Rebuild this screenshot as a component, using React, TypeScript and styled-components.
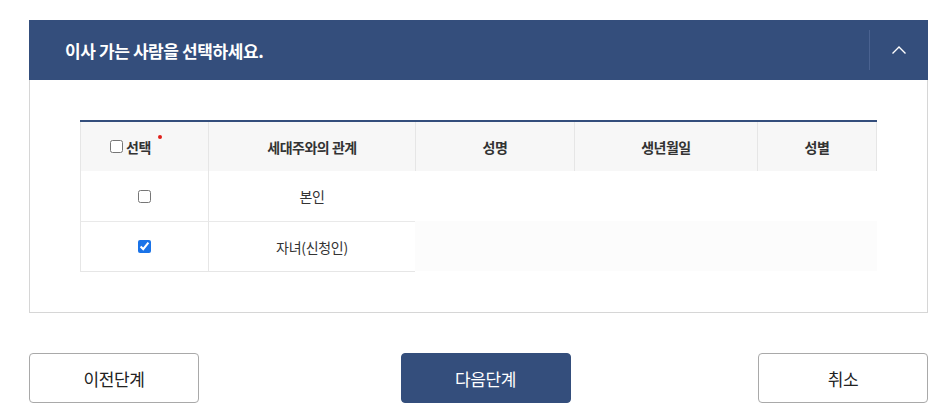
import React from "react";
import styled, { createGlobalStyle } from "styled-components";

const Global = createGlobalStyle`
  html, body { margin: 0; padding: 0; background: #fff; }
  body { font-family: "Noto Sans CJK KR", "Noto Sans", sans-serif; color: #333; }
  * { box-sizing: border-box; }
`;

const Page = styled.div`
  padding: 20px 24px 0 29px;
`;

const Section = styled.section`
  display: flex;
  flex-direction: column;
`;

const Bar = styled.div`
  height: 60px;
  background: #344e7c;
  display: flex;
  align-items: center;
  padding-left: 36px;
`;

const Title = styled.h2`
  flex: 1;
  margin: 0;
  font-size: 17px;
  font-weight: 700;
  color: #fff;
  letter-spacing: -0.4px;
`;

const Toggle = styled.button`
  width: 59px;
  height: 40px;
  border: 0;
  border-left: 1px solid #4a6290;
  background: transparent;
  display: flex;
  align-items: center;
  justify-content: center;
  padding: 0;
  cursor: pointer;
`;

const Body = styled.div`
  border: 1px solid #d6d6d6;
  border-top: 0;
  padding: 40px 50px 40px 50px;
  height: 233px;
`;

const Table = styled.div`
  display: grid;
  grid-template-columns: 128px 207px 159px 183px 120px;
  border-top: 2px solid #344e7c;
  width: 797px;
`;

const HeadCell = styled.div<{ $last?: boolean }>`
  height: 49px;
  background: #f7f7f7;
  display: flex;
  align-items: center;
  justify-content: center;
  font-size: 14px;
  font-weight: 700;
  color: #333;
  letter-spacing: -0.5px;
  border-left: 1px solid #e6e6e6;
  border-right: ${(p) => (p.$last ? "1px solid #e6e6e6" : "0")};
  position: relative;
`;

const Cell = styled.div<{ $first?: boolean; $masked?: boolean; $shade?: boolean }>`
  height: 50px;
  display: flex;
  align-items: center;
  justify-content: center;
  font-size: 14px;
  color: #333;
  letter-spacing: -0.3px;
  border-left: ${(p) => (p.$masked ? "0" : "1px solid #e6e6e6")};
  border-top: ${(p) => (p.$first || p.$masked ? "0" : "1px solid #e9e9e9")};
  background: ${(p) => (p.$shade ? "#fcfcfc" : "#fff")};
`;

const BottomLine = styled.div`
  grid-column: 1 / 3;
  height: 1px;
  background: #e6e6e6;
`;

const Check = styled.input`
  width: 13px;
  height: 13px;
  margin: 0;
  accent-color: #1a73e8;
`;

const SelectLabel = styled.label`
  display: flex;
  align-items: center;
  gap: 3px;
  padding-right: 28px;
`;

const Required = styled.span`
  position: absolute;
  width: 4px;
  height: 4px;
  border-radius: 50%;
  background: #e0201b;
  top: 13px;
  left: 77px;
`;

const Actions = styled.div`
  display: flex;
  justify-content: space-between;
  margin-top: 40px;
`;

const Button = styled.button<{ $primary?: boolean }>`
  width: 170px;
  height: 50px;
  border-radius: 4px;
  border: 1px solid ${(p) => (p.$primary ? "#344e7c" : "#a9a9a9")};
  background: ${(p) => (p.$primary ? "#344e7c" : "#fff")};
  color: ${(p) => (p.$primary ? "#fff" : "#222")};
  font-family: inherit;
  font-size: 17px;
  font-weight: 400;
  letter-spacing: -0.4px;
  margin-left: ${(p) => (p.$primary ? "14px" : "0")};
  cursor: pointer;
`;

export default function App() {
  return (
    <Page>
      <Global />
      <Section>
        <Bar>
          <Title>이사 가는 사람을 선택하세요.</Title>
          <Toggle aria-label="접기">
            <svg width="16" height="10" viewBox="0 0 16 10">
              <path d="M1.5 8.5 L8 2 L14.5 8.5" fill="none" stroke="#fff" strokeWidth="1.4" />
            </svg>
          </Toggle>
        </Bar>
        <Body>
          <Table>
            <HeadCell>
              <SelectLabel>
                <Check type="checkbox" />
                선택
              </SelectLabel>
              <Required />
            </HeadCell>
            <HeadCell>세대주와의 관계</HeadCell>
            <HeadCell>성명</HeadCell>
            <HeadCell>생년월일</HeadCell>
            <HeadCell $last>성별</HeadCell>

            <Cell $first>
              <Check type="checkbox" />
            </Cell>
            <Cell $first>본인</Cell>
            <Cell $masked />
            <Cell $masked />
            <Cell $masked />

            <Cell>
              <Check type="checkbox" defaultChecked />
            </Cell>
            <Cell>자녀(신청인)</Cell>
            <Cell $masked $shade />
            <Cell $masked $shade />
            <Cell $masked $shade />
            <BottomLine />
          </Table>
        </Body>
        <Actions>
          <Button>이전단계</Button>
          <Button $primary>다음단계</Button>
          <Button>취소</Button>
        </Actions>
      </Section>
    </Page>
  );
}
